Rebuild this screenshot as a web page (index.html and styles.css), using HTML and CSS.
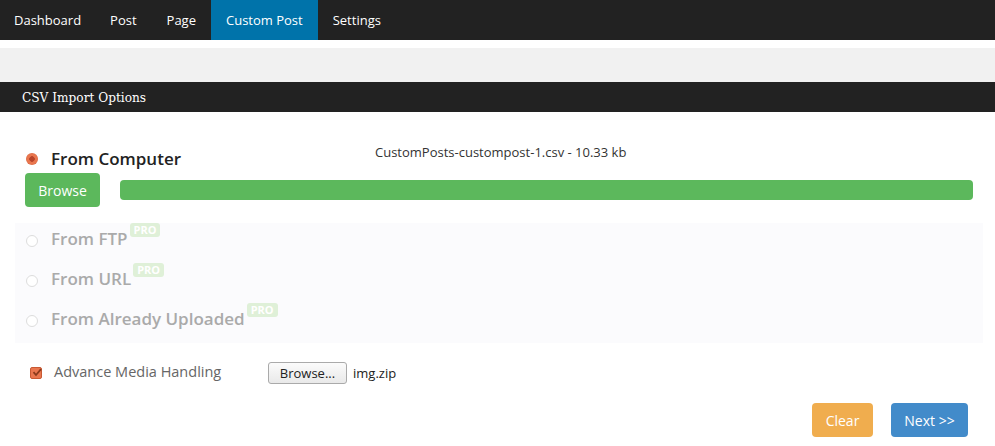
FILE: index.html
```html
<!DOCTYPE html>
<html>
<head>
<meta charset="utf-8">
<link rel="stylesheet" href="styles.css">
</head>
<body>
<nav class="nav">
  <a class="nav-item">Dashboard</a>
  <a class="nav-item">Post</a>
  <a class="nav-item">Page</a>
  <a class="nav-item active">Custom Post</a>
  <a class="nav-item">Settings</a>
</nav>
<div class="gap"></div>
<div class="band"></div>
<div class="panel-head">CSV Import Options</div>
<main class="panel">
  <div class="computer">
    <div class="computer-top">
      <label class="opt opt-on"><span class="radio on"></span><span>From Computer</span></label>
      <div class="filename">CustomPosts-custompost-1.csv - 10.33 kb</div>
    </div>
    <div class="upload-row">
      <button class="btn btn-green">Browse</button>
      <div class="progress"></div>
    </div>
  </div>
  <div class="disabled-box">
    <label class="opt opt-off"><span class="radio"></span><span>From FTP</span><span class="pro">PRO</span></label>
    <label class="opt opt-off"><span class="radio"></span><span>From URL</span><span class="pro">PRO</span></label>
    <label class="opt opt-off"><span class="radio"></span><span>From Already Uploaded</span><span class="pro">PRO</span></label>
  </div>
  <div class="media-row">
    <label class="media-label"><span class="check"><svg width="10" height="9" viewBox="0 0 10 9"><path d="M1.5 4.2 L4 7 L9 1.2" fill="none" stroke="#8a3a1c" stroke-width="1.8"/></svg></span>Advance Media Handling</label>
    <button class="file-btn">Browse...</button>
    <span class="file-name">img.zip</span>
  </div>
  <div class="actions">
    <button class="btn btn-orange">Clear</button>
    <button class="btn btn-blue">Next &gt;&gt;</button>
  </div>
</main>
</body>
</html>
```
FILE: styles.css
```css
* { box-sizing: border-box; }
body {
  margin: 0;
  font-family: "Open Sans", "Liberation Sans", sans-serif;
  background: #fff;
  color: #333;
}
.nav {
  display: flex;
  height: 40px;
  background: #222;
}
.nav-item {
  display: flex;
  align-items: center;
  padding: 0 15px;
  color: #fff;
  font-size: 13px;
  line-height: 40px;
}
.nav-item:first-child { padding-left: 14px; padding-right: 14px; }
.nav-item.active { background: #0073aa; }
.gap { height: 8px; }
.band { height: 34px; background: #f1f1f1; }
.panel-head {
  height: 30px;
  background: #222;
  color: #fff;
  font-family: "DejaVu Serif", "Liberation Serif", serif;
  font-stretch: condensed;
  font-size: 13.5px;
  line-height: 31px;
  padding-left: 22px;
}
.panel { padding: 0 0 0 15px; }
.computer { padding: 32px 22px 0 10px; }
.computer-top {
  display: flex;
  align-items: flex-start;
  height: 29px;
}
.opt {
  display: flex;
  align-items: center;
  font-size: 17px;
  font-weight: 600;
}
.opt-on { color: #222; padding-top: 3px; }
.radio {
  width: 12px;
  height: 12px;
  border-radius: 50%;
  border: 1px solid #ddd;
  background: #fff;
  margin: 0 13px 0 1px;
  flex: none;
}
.radio.on {
  border: none;
  background: radial-gradient(circle, #b8442a 0 2.5px, #e9764e 3px 5px, #d8653f 6px);
}
.filename {
  margin-left: 194px;
  font-size: 13px;
  color: #333;
  line-height: 18px;
  margin-top: -1px;
}
.upload-row {
  display: flex;
  align-items: center;
  gap: 20px;
}
.btn {
  border: none;
  border-radius: 4px;
  color: #fff;
  font-family: "Open Sans", "Liberation Sans", sans-serif;
  font-size: 14px;
  height: 34px;
  padding: 0 12px;
}
.btn-green { background: #5cb85c; width: 75px; }
.progress {
  flex: 1;
  height: 20px;
  background: #5cb85c;
  border-radius: 4px;
}
.disabled-box {
  margin: 16px 12px 0 0;
  background: #fbfbfd;
  height: 120px;
  padding: 1px 0 0 10px;
  display: flex;
  flex-direction: column;
  gap: 14px;
}
.opt-off { color: #aaa; height: 26px; align-items: flex-end; }
.opt-off .radio { align-self: center; margin-top: 8px; }
.pro {
  align-self: flex-start;
  background: #dff0d8;
  color: #fff;
  font-size: 11px;
  font-weight: 700;
  border-radius: 3px;
  padding: 0 4px;
  line-height: 14px;
  margin-top: -1px;
  margin-left: 2px;
}
.media-row {
  display: flex;
  align-items: center;
  height: 22px;
  margin-top: 19px;
  padding-left: 15px;
}
.media-label {
  display: flex;
  align-items: center;
  font-size: 14.5px;
  color: #666;
  width: 238px;
  margin-top: -3px;
}
.check {
  width: 12px;
  height: 12px;
  background: #e9764e;
  border: 1px solid #c85a34;
  border-radius: 2px;
  margin-right: 12px;
  position: relative;
  margin-top: 2px;
}
.check svg { position: absolute; left: 1px; top: 0; }
.file-btn {
  height: 22px;
  width: 79px;
  font-family: "Open Sans", "Liberation Sans", sans-serif;
  font-size: 13px;
  color: #222;
  background: linear-gradient(#fbfbfb, #e9e9e9);
  border: 1px solid #aaa;
  border-radius: 3px;
  padding: 0;
}
.file-name { font-size: 13px; color: #222; margin-left: 6px; }
.actions {
  display: flex;
  justify-content: flex-end;
  gap: 18px;
  margin-top: 19px;
  padding-right: 27px;
}
.btn-orange { background: #f0ad4e; width: 61px; }
.btn-blue { background: #428bca; width: 77px; }
```
